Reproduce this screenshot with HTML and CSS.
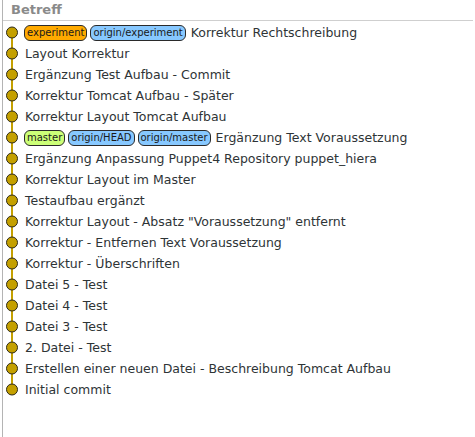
FILE: index.html
```html
<!DOCTYPE html>
<html>
<head>
<meta charset="utf-8">
<link rel="stylesheet" href="styles.css">
</head>
<body>
<div class="panel">
  <div class="header">Betreff</div>
  <div class="rows">
    <div class="row first"><svg class="g" width="22" height="21"><line x1="12" y1="10.5" x2="12" y2="21"/><circle cx="12" cy="10.5" r="5.5"/></svg><span class="ref exp">experiment</span><span class="ref rem">origin/experiment</span><span class="msg">Korrektur Rechtschreibung</span></div>
    <div class="row"><svg class="g" width="22" height="21"><line x1="12" y1="0" x2="12" y2="21"/><circle cx="12" cy="10.5" r="5.5"/></svg><span class="msg">Layout Korrektur</span></div>
    <div class="row"><svg class="g" width="22" height="21"><line x1="12" y1="0" x2="12" y2="21"/><circle cx="12" cy="10.5" r="5.5"/></svg><span class="msg">Ergänzung Test Aufbau - Commit</span></div>
    <div class="row"><svg class="g" width="22" height="21"><line x1="12" y1="0" x2="12" y2="21"/><circle cx="12" cy="10.5" r="5.5"/></svg><span class="msg">Korrektur Tomcat Aufbau - Später</span></div>
    <div class="row"><svg class="g" width="22" height="21"><line x1="12" y1="0" x2="12" y2="21"/><circle cx="12" cy="10.5" r="5.5"/></svg><span class="msg">Korrektur Layout Tomcat Aufbau</span></div>
    <div class="row"><svg class="g" width="22" height="21"><line x1="12" y1="0" x2="12" y2="21"/><circle cx="12" cy="10.5" r="5.5"/></svg><span class="ref loc">master</span><span class="ref rem">origin/HEAD</span><span class="ref rem">origin/master</span><span class="msg">Ergänzung Text Voraussetzung</span></div>
    <div class="row"><svg class="g" width="22" height="21"><line x1="12" y1="0" x2="12" y2="21"/><circle cx="12" cy="10.5" r="5.5"/></svg><span class="msg">Ergänzung Anpassung Puppet4 Repository puppet_hiera</span></div>
    <div class="row"><svg class="g" width="22" height="21"><line x1="12" y1="0" x2="12" y2="21"/><circle cx="12" cy="10.5" r="5.5"/></svg><span class="msg">Korrektur Layout im Master</span></div>
    <div class="row"><svg class="g" width="22" height="21"><line x1="12" y1="0" x2="12" y2="21"/><circle cx="12" cy="10.5" r="5.5"/></svg><span class="msg">Testaufbau ergänzt</span></div>
    <div class="row"><svg class="g" width="22" height="21"><line x1="12" y1="0" x2="12" y2="21"/><circle cx="12" cy="10.5" r="5.5"/></svg><span class="msg">Korrektur Layout - Absatz "Voraussetzung" entfernt</span></div>
    <div class="row"><svg class="g" width="22" height="21"><line x1="12" y1="0" x2="12" y2="21"/><circle cx="12" cy="10.5" r="5.5"/></svg><span class="msg">Korrektur - Entfernen Text Voraussetzung</span></div>
    <div class="row"><svg class="g" width="22" height="21"><line x1="12" y1="0" x2="12" y2="21"/><circle cx="12" cy="10.5" r="5.5"/></svg><span class="msg">Korrektur - Überschriften</span></div>
    <div class="row"><svg class="g" width="22" height="21"><line x1="12" y1="0" x2="12" y2="21"/><circle cx="12" cy="10.5" r="5.5"/></svg><span class="msg">Datei 5 - Test</span></div>
    <div class="row"><svg class="g" width="22" height="21"><line x1="12" y1="0" x2="12" y2="21"/><circle cx="12" cy="10.5" r="5.5"/></svg><span class="msg">Datei 4 - Test</span></div>
    <div class="row"><svg class="g" width="22" height="21"><line x1="12" y1="0" x2="12" y2="21"/><circle cx="12" cy="10.5" r="5.5"/></svg><span class="msg">Datei 3 - Test</span></div>
    <div class="row"><svg class="g" width="22" height="21"><line x1="12" y1="0" x2="12" y2="21"/><circle cx="12" cy="10.5" r="5.5"/></svg><span class="msg">2. Datei - Test</span></div>
    <div class="row"><svg class="g" width="22" height="21"><line x1="12" y1="0" x2="12" y2="21"/><circle cx="12" cy="10.5" r="5.5"/></svg><span class="msg">Erstellen einer neuen Datei - Beschreibung Tomcat Aufbau</span></div>
    <div class="row"><svg class="g" width="22" height="21"><line x1="12" y1="0" x2="12" y2="10.5"/><circle cx="12" cy="10.5" r="5.5"/></svg><span class="msg">Initial commit</span></div>
  </div>
</div>
</body>
</html>
```
FILE: styles.css
```css
html, body {
  margin: 0;
  padding: 0;
  background: #ffffff;
}
body {
  font-family: "DejaVu Sans", sans-serif;
  width: 475px;
  height: 437px;
  overflow: hidden;
}
.panel {
  height: 437px;
  margin-left: 2px;
  border-left: 1px solid #b4b4b4;
  box-sizing: border-box;
}
.header {
  height: 21px;
  box-sizing: border-box;
  padding: 2px 0 0 8px;
  font-size: 13px;
  font-weight: bold;
  color: #8a8a8a;
  border-bottom: 1px solid #cfcfcf;
  margin-right: 2px;
}
.rows {
  padding-top: 1px;
}
.row {
  height: 21px;
  display: flex;
  align-items: center;
  white-space: nowrap;
}
.g {
  flex: none;
  margin-left: -3px;
  margin-right: 2px;
}
.g line {
  stroke: #c4a000;
  stroke-width: 2;
}
.g circle {
  fill: #c4a000;
  stroke: #2e2a1a;
  stroke-width: 1;
}
.ref {
  font-size: 10px;
  line-height: 14px;
  height: 14px;
  padding: 0 2px;
  border: 1px solid #2a2a2a;
  border-radius: 6px;
  margin-right: 3px;
  color: #1a1a1a;
}
.exp { background: #ffaa00; }
.rem { background: #87c8ff; }
.loc { background: #ccff77; }
.msg {
  font-size: 12.5px;
  color: #2e3436;
  margin-left: 1px;
}
.ref + .msg {
  margin-left: 2px;
}
```
